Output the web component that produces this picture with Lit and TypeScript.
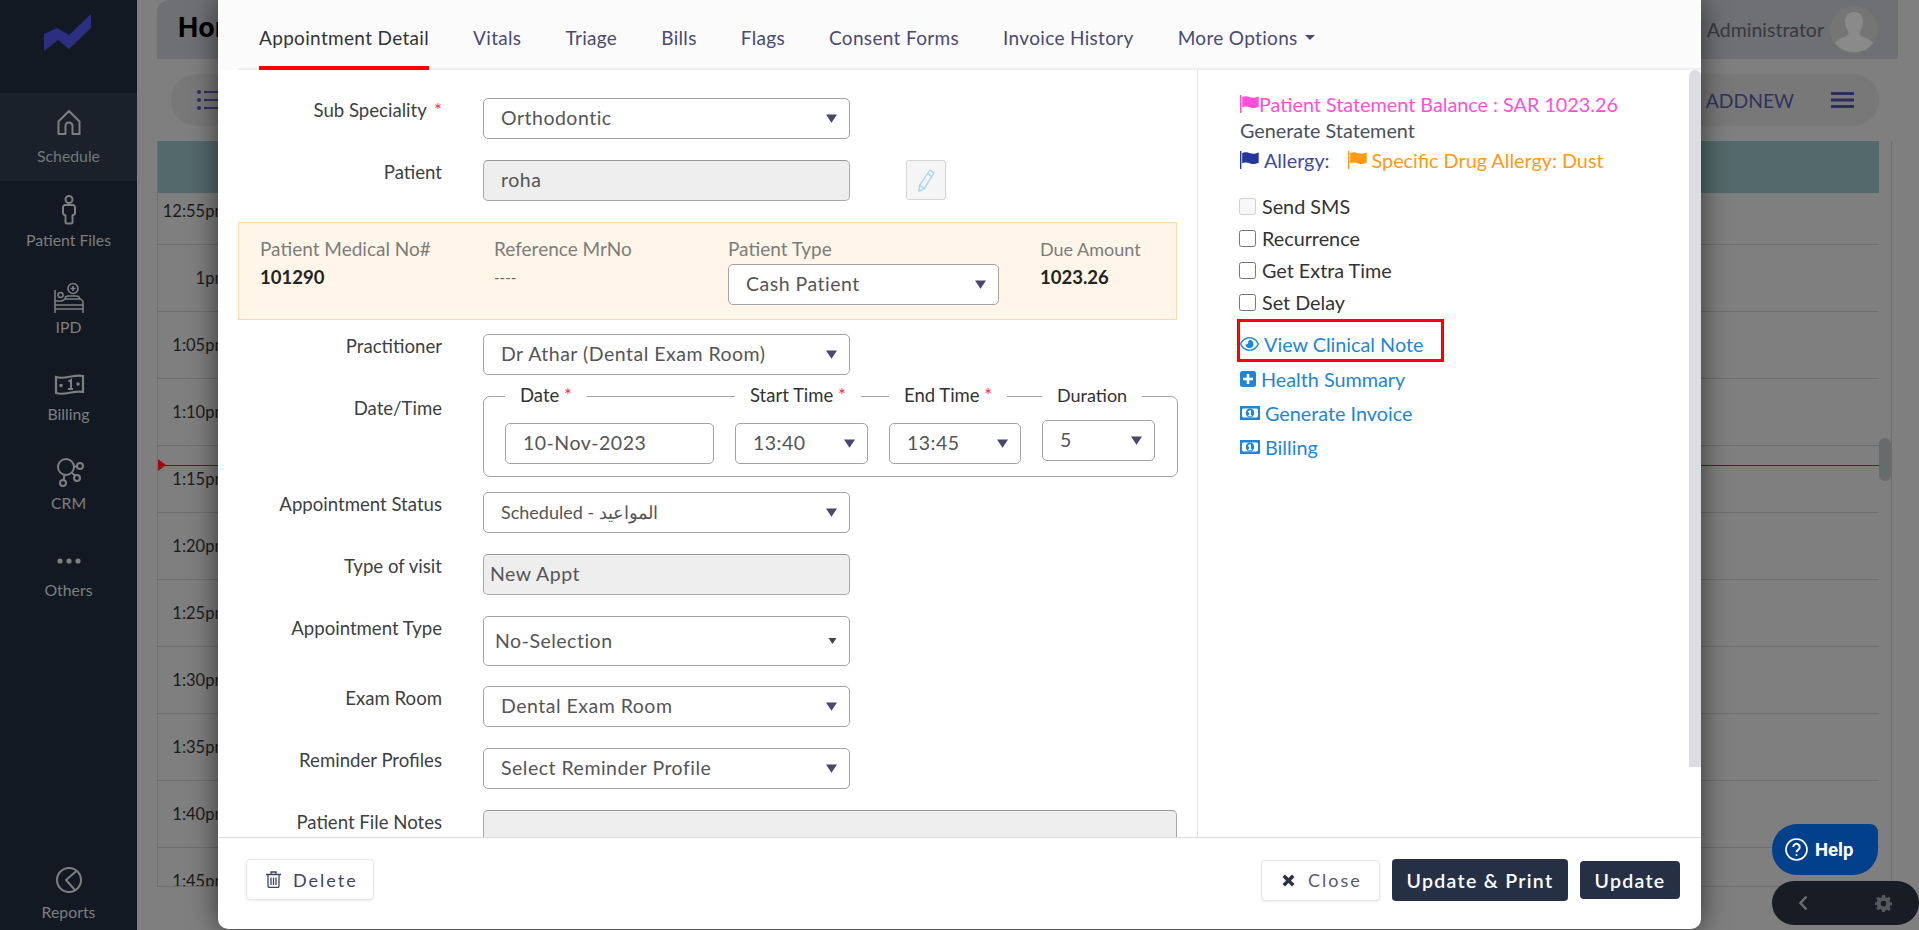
import { LitElement, html, css, svg } from "lit";
import { customElement } from "lit/decorators.js";

const arrow = html`<svg class="arrow" viewBox="0 0 12 9"><path d="M0 0h12L6 9z"/></svg>`;
const flag = html`<svg class="flag" viewBox="0 0 19 18"><path d="M0 0h1.4v18H0z"/><path d="M2.2 2c3-1.6 5.500-.5 8 .3 2.400.7 4.600.7 8.500-.8v10.300c-3.800 1.600-6.100 1.500-8.500.7-2.500-.8-5-1.700-8-.2z"/></svg>`;
const money = html`<svg class="lk" viewBox="0 0 20 14"><path fill-rule="evenodd" d="M0 0h20v14H0zM3 2.500a2 2 0 0 1-1 1v7a2 2 0 0 1 1 1h14a2 2 0 0 1 1-1v-7a2 2 0 0 1-1-1z"/><path fill-rule="evenodd" d="M10 2.500a4.200 4.500 0 1 1 0 9 4.200 4.500 0 0 1 0-9zM9.700 4.300 8 5.400v1h1v2.800H8v1h4v-1h-1.100V4.300z"/></svg>`;

@customElement("app-root")
export class AppRoot extends LitElement {
  static styles = css`
    :host { display: block; width: 1919px; height: 930px; position: relative; overflow: hidden; background: #7c7e7c; font-family: "Lato", "Liberation Sans", sans-serif; }
    * { box-sizing: border-box; }
    .page { display: flex; height: 930px; }
    .side { width: 137px; background: #131922; display: flex; flex-direction: column; align-items: stretch; color: #7d7f80; font-size: 15.800px; }
    .logo { height: 93px; padding: 14px 0 0 44px; }
    .logo svg { width: 48px; height: 37px; display: block; }
    .it { display: flex; flex-direction: column; align-items: center; padding-top: 14px; height: 87px; }
    .it svg { width: 36px; height: 32px; fill: none; stroke: #7d7f80; stroke-width: 1.6; display: block; }
    .it span { margin-top: 2px; line-height: 22px; }
    .it.on { background: #1b212b; height: 88px; color: #6f7a78; }
    .it.on span { margin-top: 6px; }
    .it.rep { margin-top: auto; height: 66px; padding-top: 0; }
    .it.rep span { margin-top: 5px; }
    .it.crm { height: 89px; }
    .it.crm span { margin-top: 4px; }
    .main { flex: 1; padding-left: 20px; background: #7f7f7f; display: flex; flex-direction: column; min-width: 0; }
    .top { height: 59px; margin-right: 21px; background: #6e7074; border-top-left-radius: 12px; display: flex; align-items: center; justify-content: space-between; padding: 0 20px 4px 21px; }
    .top h1 { margin: 0; font-size: 27px; font-weight: 700; color: #000; font-family: "Inter", sans-serif; }
    .user { display: flex; align-items: center; gap: 6px; color: #37393d; font-size: 19.500px; padding-top: 4px; }
    .user svg { width: 48px; height: 48px; display: block; }
    .tool { height: 52px; margin: 15px 40px 15px 14px; border-radius: 26px; background: #787878; display: flex; align-items: center; justify-content: space-between; padding: 0 25px 0 26px; color: #2f325c; font-size: 19.300px; }
    .tool svg { display: block; }
    .tool .r { display: flex; align-items: center; gap: 37px; }
    .grid { width: 1735px; height: 746px; border-left: 1px solid #6e6e6e; border-right: 1px solid #6e6e6e; border-bottom: 1px solid #6e6e6e; position: relative; display: flex; flex-direction: column; }
    .teal { height: 52px; margin-right: 12px; background: #53696b; flex: none; }
    .rows { flex: 1; overflow: hidden; margin-right: 12px; }
    .rowsin { margin-top: -15px; }
    .row { height: 67px; border-bottom: 1px solid #6e6e6e; display: flex; align-items: center; font-size: 16.500px; color: #1b1b1b; }
    .row span { width: 70px; text-align: right; }
    .thumb { position: absolute; right: 0; top: 297px; width: 12px; height: 43px; border-radius: 6px; background: #696a6c; }
    .now { position: absolute; left: 0; right: 12px; top: 324px; height: 1px; background: #7d0c0c; }
    .tri { position: absolute; left: 0; top: 318px; border-left: 8px solid #a00d0d; border-top: 6px solid transparent; border-bottom: 6px solid transparent; }
    .modal { position: absolute; left: 218px; top: 0; width: 1483px; height: 929px; background: #fff; border-radius: 0 0 10px 10px; box-shadow: 0 1px 28px rgba(0,0,0,.6); display: flex; flex-direction: column; overflow: hidden; }
    .tabs { height: 70px; flex: none; background: #fbfbfc; display: flex; gap: 44px; padding-left: 41px; font-size: 19px; letter-spacing: .33px; color: #4a4a72; position: relative; }
    .tabs::after { content: ""; position: absolute; left: 20px; right: 0; bottom: 0; height: 2px; background: #efefef; }
    .tab { height: 70px; position: relative; z-index: 1; display: flex; gap: 7px; align-items: center; padding-top: 4px; }
    .tab.on { color: #333; border-bottom: 4px solid #f00; padding-top: 8px; }
    .tab svg { width: 10px; height: 5px; fill: #4a4a72; }
    .body { flex: 1; display: flex; min-height: 0; overflow: hidden; }
    .left { width: 980px; flex: none; border-right: 1px solid #e1e1e1; padding-top: 28px; overflow: hidden; }
    .frow { display: flex; margin-bottom: 21px; }
    .lab { width: 224px; margin-right: 41px; margin-top: -1px; height: 26px; flex: none; text-align: right; font-size: 18.600px; line-height: 26px; color: #3c3f42; white-space: nowrap; }
    .lab i { font-style: normal; color: #f33; margin-left: 3px; }
    .sel, .inp { height: 41px; width: 367px; border: 1px solid #a3a3a3; border-radius: 5px; display: flex; align-items: center; justify-content: space-between; padding: 0 12px 2px 17px; font-size: 19.500px; letter-spacing: .5px; color: #555; background: #fff; flex: none; white-space: nowrap; }
    .sel .arrow { margin-top: 2px; }
    .ar { font-size: 18px; letter-spacing: 0; }
    .dis { background: #eee; border-color: #a8a8a8; border-top-color: #999; }
    .arrow { width: 11px; height: 9px; fill: #47476f; flex: none; }
    .edit { width: 40px; height: 40px; margin-left: 56px; background: #f5f5f5; border: 1px solid #d5d5d5; border-radius: 3px; display: flex; align-items: center; justify-content: center; }
    .edit svg { width: 20px; height: 24px; fill: none; stroke: #9ed3f7; stroke-width: 1.2; }
    .info { margin: 0 20px 14px; height: 98px; background: #fff6e9; border: 1px solid #fbdca8; display: flex; padding: 14px 0 0 21px; font-size: 19px; line-height: 24px; color: #7c7c7c; }
    .info > div { width: 234px; flex: none; }
    .info > .w { width: 312px; }
    .info > .due { font-size: 18px; width: 120px; }
    .info b { display: block; margin-top: 4px; color: #222; font-weight: 700; font-size: 18.500px; }
    .info p { margin: 4px 0 0; color: #666; font-size: 15px; }
    .info .sel { width: 271px; margin-top: 3px; }
    .dt { width: 695px; height: 81px; border: 1px solid #a3a3a3; border-radius: 7px; display: flex; padding-left: 21px; gap: 21px; }
    .dc { display: flex; flex-direction: column; }
    .dc > span { align-self: flex-start; margin-top: -14px; background: #fff; padding: 0 15px; line-height: 24px; font-size: 18.500px; color: #333; white-space: nowrap; height: 24px; }
    .dc > span i { font-style: normal; color: #f33; }
    .dc.d > span { font-size: 18px; }
    .dc .sel, .dc .inp { margin-top: 16px; height: 41px; }
    .dc.d .sel { margin-top: 13px; }
    .w210 { width: 209px !important; } .w133 { width: 133px !important; } .w132 { width: 132px !important; } .w113 { width: 113px !important; }
    .f15 { margin-bottom: 15px; }
    .g21 { margin-bottom: 21px; }
    .tall { height: 50px; padding-left: 11px; }
    .tall .arrow { width: 9px; height: 6px; fill: #444; }
    .g20 { margin-bottom: 20px; }
    .plain { padding-left: 6px; }
    .wide { width: 694px; height: 80px; }
    .right { flex: 1; padding: 21px 0 0 42px; font-size: 19.800px; color: #48525c; }
    .l { line-height: 26px; display: flex; align-items: center; white-space: nowrap; }
    .flag { width: 19px; height: 18px; fill: currentColor; flex: none; }
    .pink { color: #ff4fd8; }
    .blue { color: #3f4ba0; margin-top: 4px; }
    .blue .flag { color: #23389a; margin-right: 5px; }
    .orange { color: #ff9a10; margin-left: 18px; display: inline-flex; align-items: center; }
    .orange .flag { color: #ff9a10; margin-right: 5px; }
    .ck { height: 32px; display: flex; align-items: center; gap: 6px; color: #333; }
    .ck input { width: 17px; height: 17px; margin: 0 0 0 -1px; }
    .cks { margin-top: 17px; height: 129px; }
    .lnk { height: 34px; display: flex; align-items: center; color: #1f86d6; gap: 5px; }
    .lk { width: 20px; height: 14px; fill: #1f86d6; flex: none; }
    .box { width: 207px; margin-left: -3px; border: 3px solid #f00; padding-top: 7px; height: 43px; }
    .box svg { width: 19px; height: 14px; flex: none; }
    .plus { width: 16px; height: 16px; flex: none; }
    .sb { width: 12px; flex: none; }
    .sb div { height: 697px; background: #dcdde2; border-radius: 6px 6px 0 0; }
    .foot { height: 92px; flex: none; border-top: 1px solid #dcdcdc; display: flex; align-items: flex-start; justify-content: space-between; padding: 21px 21px 0 28px; }
    .fr { display: flex; align-items: center; gap: 12px; height: 42px; }
    .btn { height: 41px; border-radius: 4px; font-size: 18px; display: flex; align-items: center; letter-spacing: 2px; }
    .wh { background: #fff; border: 1px solid #e6e6e6; box-shadow: 0 1px 3px rgba(0,0,0,.08); color: #3c4563; }
    .dk { background: #263045; color: #fff; font-weight: 600; justify-content: center; letter-spacing: 1.300px; font-size: 19.500px; }
    .del { width: 128px; padding-left: 19px; gap: 12px; }
    .cl { width: 119px; padding-left: 20px; gap: 13px; color: #555c6e; }
    .up { width: 176px; height: 42px; }
    .u2 { width: 100px; height: 38px; }
    .help { position: absolute; left: 1772px; top: 824px; width: 106px; height: 51px; background: #03408c; border-radius: 25px 8px 25px 25px; color: #fff; font-weight: 700; font-size: 18.500px; display: flex; align-items: center; padding-left: 13px; gap: 7px; font-family: "Roboto", sans-serif; }
    .help svg { width: 23px; height: 23px; }
    .dock { position: absolute; left: 1772px; top: 881px; width: 147px; height: 44px; background: #181c24; border-radius: 22px; display: flex; align-items: center; justify-content: space-between; padding: 0 27px 0 26px; }
    .dock svg { display: block; }
  `;

  private side(label: string, icon: unknown, cls = "") {
    return html`<div class="it ${cls}">${icon}<span>${label}</span></div>`;
  }

  render() {
    const times = ["12:55pm","1pm","1:05pm","1:10pm","1:15pm","1:20pm","1:25pm","1:30pm","1:35pm","1:40pm","1:45pm"];
    return html`
    <div class="page">
      <nav class="side">
        <div class="logo"><svg viewBox="0 0 48 37"><path d="M0 20 13 14 25 21 47 0v14L25 35 14 26 0 37z" fill="#2c2f80"/></svg></div>
        ${this.side("Schedule", html`<svg viewBox="0 0 36 32">${svg`<path d="M7.500 27V14.500L18 4l10.500 10.500V27h-7v-8a3.500 3.500 0 0 0-7 0v8z" stroke-linejoin="round" stroke-width="2"/>`}</svg>`, "on")}
        ${this.side("Patient Files", html`<svg viewBox="0 0 36 32">${svg`<circle cx="18" cy="4.500" r="3.500" stroke-width="2"/><path d="M12 13a2.500 2.500 0 0 1 2.500-3h7A2.500 2.500 0 0 1 24 13v5c0 1.500-1 2-2.500 2.500V27a1.500 1.500 0 0 1-1.500 1.500h-4a1.500 1.500 0 0 1-1.500-1.500v-6.500C13 20 12 19.500 12 18z" stroke-width="2"/>`}</svg>`)}
        ${this.side("IPD", html`<svg viewBox="0 0 36 32">${svg`<circle cx="22" cy="6.500" r="5"/><path d="M22 4v5M19.500 6.500h5" /><circle cx="9.500" cy="13" r="2.500"/><path d="M4 8v23M4 27h28v4M32 27v-6a4 4 0 0 0-4-4H14l-3 2H4M4 23h28M14 17a3 3 0 0 1 3-3h8a4 4 0 0 1 4 3"/>`}</svg>`)}
        ${this.side("Billing", html`<svg viewBox="0 0 36 32">${svg`<path d="M5 8c8 3 18-3 27-1v16c-9-2-19 4-27 1z" stroke-width="2.200"/><path d="M17.500 12.500 20 11v9M17 20h5" stroke-width="2"/><circle cx="10" cy="16.500" r="1" fill="#7d7f80"/><circle cx="27" cy="15" r="1" fill="#7d7f80"/>`}</svg>`)}
        ${this.side("CRM", html`<svg viewBox="0 0 36 32">${svg`<circle cx="15" cy="11" r="8" stroke-width="2"/><circle cx="29" cy="10" r="3" stroke-width="2"/><circle cx="26" cy="22" r="3" stroke-width="2"/><circle cx="12" cy="27" r="3" stroke-width="2"/><path d="M23 10.500h3M21 17l3.500 3M13.500 19l-1 5" stroke-width="2"/>`}</svg>`, "crm")}
        ${this.side("Others", html`<svg viewBox="0 0 36 32">${svg`<g fill="#7d7f80" stroke="none"><circle cx="9" cy="16" r="2.600"/><circle cx="18" cy="16" r="2.600"/><circle cx="27" cy="16" r="2.600"/></g>`}</svg>`)}
        ${this.side("Reports", html`<svg viewBox="0 0 36 32">${svg`<circle cx="18" cy="16" r="12" stroke-width="2"/><path d="M26 6.500 15 16l9 10" stroke-width="2" stroke-linejoin="round"/>`}</svg>`, "rep")}
      </nav>
      <div class="main">
        <div class="top">
          <h1>Home</h1>
          <div class="user">Administrator
            <svg viewBox="0 0 48 48"><circle cx="24" cy="24" r="24" fill="#757575"/><path d="M24 6c6 0 9 4 9 9 0 4-1 7-3 10-1 3 0 5 3 6 4 1 8 3 10 6a24 24 0 0 1-38 0c2-3 6-5 10-6 3-1 4-3 3-6-2-3-3-6-3-10 0-5 3-9 9-9z" fill="#8a8a8a"/></svg>
          </div>
        </div>
        <div class="tool">
          <svg width="22" height="22" viewBox="0 0 22 22" fill="#2f325c"><circle cx="2" cy="3" r="2"/><circle cx="2" cy="11" r="2"/><circle cx="2" cy="19" r="2"/><path d="M7 2h15v2H7zM7 10h15v2H7zM7 18h15v2H7z"/></svg>
          <div class="r"><span>ADDNEW</span>
            <svg width="23" height="16" viewBox="0 0 23 16" fill="#2b2d5c"><path d="M0 0h23v3H0zM0 6.500h23v3H0zM0 13h23v3H0z"/></svg>
          </div>
        </div>
        <div class="grid">
          <div class="teal"></div>
          <div class="rows"><div class="rowsin">${times.map((t) => html`<div class="row"><span>${t}</span></div>`)}</div></div>
          <div class="now"></div><div class="tri"></div><div class="thumb"></div>
        </div>
      </div>
    </div>

    <div class="modal">
      <div class="tabs">
        <div class="tab on">Appointment Detail</div>
        <div class="tab">Vitals</div><div class="tab">Triage</div><div class="tab">Bills</div><div class="tab">Flags</div>
        <div class="tab">Consent Forms</div><div class="tab">Invoice History</div>
        <div class="tab">More Options <svg viewBox="0 0 10 5"><path d="M0 0h10L5 5z"/></svg></div>
      </div>
      <div class="body">
        <div class="left">
          <div class="frow"><div class="lab">Sub Speciality <i>*</i></div><div class="sel">Orthodontic ${arrow}</div></div>
          <div class="frow"><div class="lab">Patient</div><div class="inp dis">roha</div>
            <div class="edit"><svg viewBox="0 0 20 24"><path d="M14 2l4 3L8 21l-5 2 .5-5.500zM11.500 5.500l4 3M4 17.500l4 3"/></svg></div></div>
          <div class="info">
            <div>Patient Medical No#<b>101290</b></div>
            <div>Reference MrNo<p>----</p></div>
            <div class="w">Patient Type<div class="sel">Cash Patient ${arrow}</div></div>
            <div class="due">Due Amount<b>1023.26</b></div>
          </div>
          <div class="frow"><div class="lab">Practitioner</div><div class="sel">Dr Athar (Dental Exam Room) ${arrow}</div></div>
          <div class="frow f15"><div class="lab">Date/Time</div>
            <div class="dt">
              <div class="dc"><span>Date <i>*</i></span><div class="inp w210">10-Nov-2023</div></div>
              <div class="dc"><span>Start Time <i>*</i></span><div class="sel w133">13:40 ${arrow}</div></div>
              <div class="dc"><span>End Time <i>*</i></span><div class="sel w132">13:45 ${arrow}</div></div>
              <div class="dc d"><span>Duration</span><div class="sel w113">5 ${arrow}</div></div>
            </div>
          </div>
          <div class="frow g21"><div class="lab">Appointment Status</div><div class="sel"><span class="ar">Scheduled - المواعيد</span> ${arrow}</div></div>
          <div class="frow"><div class="lab">Type of visit</div><div class="inp dis plain">New Appt</div></div>
          <div class="frow g20"><div class="lab">Appointment Type</div><div class="sel tall">No-Selection ${arrow}</div></div>
          <div class="frow"><div class="lab">Exam Room</div><div class="sel">Dental Exam Room ${arrow}</div></div>
          <div class="frow"><div class="lab">Reminder Profiles</div><div class="sel">Select Reminder Profile ${arrow}</div></div>
          <div class="frow"><div class="lab">Patient File Notes</div><div class="inp dis wide"></div></div>
        </div>
        <div class="right">
          <div class="l pink">${flag}Patient Statement Balance : SAR 1023.26</div>
          <div class="l">Generate Statement</div>
          <div class="l blue">${flag}Allergy: <span class="orange">${flag}Specific Drug Allergy: Dust</span></div>
          <div class="cks">
            <label class="ck"><input type="checkbox" disabled />Send SMS</label>
            <label class="ck"><input type="checkbox" />Recurrence</label>
            <label class="ck"><input type="checkbox" />Get Extra Time</label>
            <label class="ck"><input type="checkbox" />Set Delay</label>
          </div>
          <div class="lnk box"><svg viewBox="0 0 19 14" fill="#1f86d6"><path fill-rule="evenodd" d="M9.500 0C14 0 17.500 3 19 7c-1.500 4-5 7-9.500 7S1.500 11 0 7c1.500-4 5-7 9.500-7zm0 1.500C6 1.500 3 3.800 1.500 7 3 10.200 6 12.500 9.500 12.500S16 10.200 17.500 7C16 3.800 13 1.500 9.500 1.500z"/><path d="M9.500 3a4 4 0 1 1-4 4 1.800 1.800 0 0 0 2.500-2.500A4 4 0 0 1 9.500 3z"/></svg>View Clinical Note</div>
          <div class="lnk"><svg class="plus" viewBox="0 0 16 16"><rect width="16" height="16" rx="2.500" fill="#1f86d6"/><path d="M6.700 3h2.600v3.700H13v2.600H9.300V13H6.700V9.300H3V6.700h3.700z" fill="#fff"/></svg>Health Summary</div>
          <div class="lnk">${money}Generate Invoice</div>
          <div class="lnk">${money}Billing</div>
        </div>
        <div class="sb"><div></div></div>
      </div>
      <div class="foot">
        <div class="btn wh del"><svg width="15" height="17" viewBox="0 0 15 17" fill="none" stroke="#3c4563" stroke-width="1.300"><path d="M0 3.500h15M5 3.500V1h5v2.500M2 3.500V15a1.500 1.500 0 0 0 1.500 1.500h8A1.500 1.500 0 0 0 13 15V3.500M5 6.500V14M7.500 6.500V14M10 6.500V14"/></svg>Delete</div>
        <div class="fr">
          <div class="btn wh cl"><svg width="13" height="13" viewBox="0 0 13 13" fill="#2c3347"><path d="M3 .5 6.500 4 10 .5 12.500 3 9 6.500l3.500 3.500-2.500 2.500L6.500 9 3 12.500.5 10 4 6.500.5 3z"/></svg>Close</div>
          <div class="btn dk up">Update &amp; Print</div>
          <div class="btn dk u2">Update</div>
        </div>
      </div>
    </div>

    <div class="help"><svg viewBox="0 0 23 23" fill="none" stroke="#fff" stroke-width="1.600"><circle cx="11.500" cy="11.500" r="10.500"/><path d="M8.300 9a3.200 3.200 0 1 1 4.800 2.800c-1 .6-1.600 1.200-1.600 2.400" stroke-width="2"/><circle cx="11.500" cy="17" r="1" fill="#fff" stroke="none"/></svg>Help</div>
    <div class="dock">
      <svg width="10" height="16" viewBox="0 0 10 16" fill="none" stroke="#6a6d72" stroke-width="2.500"><path d="M8.500 1.500 2.500 8l6 6.500"/></svg>
      <svg width="17" height="17" viewBox="0 0 24 24" fill="#55585c"><path fill-rule="evenodd" d="M10 0h4l.6 3.200 2.300 1L19.600 2.300l2.800 2.800-1.900 2.700 1 2.300L24 10.700v3.600l-2.500.6-1 2.300 1.900 2.700-2.800 2.800-2.700-1.900-2.300 1L14 24h-4l-.6-3.200-2.300-1-2.700 1.900-2.800-2.800 1.900-2.700-1-2.300L0 14.300v-3.600l2.500-.6 1-2.300-1.900-2.700 2.800-2.800 2.700 1.900 2.300-1zM12 8a4 4 0 1 0 0 8 4 4 0 0 0 0-8z"/></svg>
    </div>`;
  }
}
